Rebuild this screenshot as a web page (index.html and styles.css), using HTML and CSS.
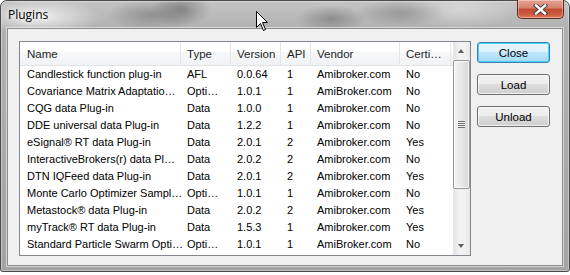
FILE: index.html
```html
<!DOCTYPE html>
<html lang="en">
<head>
    <meta charset="UTF-8">
    <title>Plugins</title>
    <link rel="stylesheet" href="styles.css">
</head>
<body>
    <div class="window">
        <div class="titlebar">
            <span class="title">Plugins</span>
            <div class="close-x">
                <svg width="15" height="11" viewBox="0 0 15 11">
                    <path d="M3 1.5 L12 9.5 M12 1.5 L3 9.5" stroke="#3b3b3b" stroke-width="4.2" stroke-linecap="square"/>
                    <path d="M3 1.5 L12 9.5 M12 1.5 L3 9.5" stroke="#ffffff" stroke-width="2.4" stroke-linecap="square"/>
                </svg>
            </div>
        </div>
        <div class="client">
            <div class="listview">
                <div class="list-body">
                    <div class="row header">
                        <div class="cell">Name</div>
                        <div class="cell">Type</div>
                        <div class="cell">Version</div>
                        <div class="cell">API</div>
                        <div class="cell">Vendor</div>
                        <div class="cell">Certi…</div>
                    </div>
                    <div class="row"><div class="cell">Candlestick function plug-in</div><div class="cell">AFL</div><div class="cell">0.0.64</div><div class="cell">1</div><div class="cell">Amibroker.com</div><div class="cell">No</div></div>
                    <div class="row"><div class="cell">Covariance Matrix Adaptatio…</div><div class="cell">Opti…</div><div class="cell">1.0.1</div><div class="cell">1</div><div class="cell">AmiBroker.com</div><div class="cell">No</div></div>
                    <div class="row"><div class="cell">CQG data Plug-in</div><div class="cell">Data</div><div class="cell">1.0.0</div><div class="cell">1</div><div class="cell">Amibroker.com</div><div class="cell">No</div></div>
                    <div class="row"><div class="cell">DDE universal data Plug-in</div><div class="cell">Data</div><div class="cell">1.2.2</div><div class="cell">1</div><div class="cell">Amibroker.com</div><div class="cell">No</div></div>
                    <div class="row"><div class="cell">eSignal® RT data Plug-in</div><div class="cell">Data</div><div class="cell">2.0.1</div><div class="cell">2</div><div class="cell">Amibroker.com</div><div class="cell">Yes</div></div>
                    <div class="row"><div class="cell">InteractiveBrokers(r) data Pl…</div><div class="cell">Data</div><div class="cell">2.0.2</div><div class="cell">2</div><div class="cell">Amibroker.com</div><div class="cell">No</div></div>
                    <div class="row"><div class="cell">DTN IQFeed data Plug-in</div><div class="cell">Data</div><div class="cell">2.0.1</div><div class="cell">2</div><div class="cell">Amibroker.com</div><div class="cell">Yes</div></div>
                    <div class="row"><div class="cell">Monte Carlo Optimizer Sampl…</div><div class="cell">Opti…</div><div class="cell">1.0.1</div><div class="cell">1</div><div class="cell">Amibroker.com</div><div class="cell">No</div></div>
                    <div class="row"><div class="cell">Metastock® data Plug-in</div><div class="cell">Data</div><div class="cell">2.0.2</div><div class="cell">2</div><div class="cell">Amibroker.com</div><div class="cell">Yes</div></div>
                    <div class="row"><div class="cell">myTrack® RT data Plug-in</div><div class="cell">Data</div><div class="cell">1.5.3</div><div class="cell">1</div><div class="cell">Amibroker.com</div><div class="cell">Yes</div></div>
                    <div class="row"><div class="cell">Standard Particle Swarm Opti…</div><div class="cell">Opti…</div><div class="cell">1.0.1</div><div class="cell">1</div><div class="cell">AmiBroker.com</div><div class="cell">No</div></div>
                </div>
                <div class="scrollbar">
                    <div class="arrow arrow-up"></div>
                    <div class="track">
                        <div class="thumb">
                            <div class="grip"></div>
                        </div>
                    </div>
                    <div class="arrow arrow-down"></div>
                </div>
            </div>
            <div class="buttons">
                <button class="btn btn-default">Close</button>
                <button class="btn">Load</button>
                <button class="btn">Unload</button>
            </div>
        </div>
        <svg class="cursor" width="13" height="21" viewBox="0 0 13 21">
            <path d="M0.5 0.5 L0.5 16.5 L4.5 12.5 L7.5 19.5 L9.5 18.5 L6.5 11.5 L11.5 11.5 Z" fill="#ffffff" stroke="#000000" stroke-width="1"/>
        </svg>
    </div>
</body>
</html>
```

FILE: styles.css
```css
* {
    margin: 0;
    padding: 0;
    box-sizing: border-box;
}

body {
    background-color: #ffffff;
    font-family: "Liberation Sans", Arial, sans-serif;
    font-size: 11px;
    color: #000;
}

/* Window frame */
.window {
    position: relative;
    width: 570px;
    height: 272px;
    border: 1px solid #4a4a4a;
    border-radius: 7px 7px 3px 3px;
    background-color: #b4b4b4;
    background-image:
        radial-gradient(ellipse 60px 18px at 40px 16px, rgba(255, 255, 255, 0.75), rgba(255, 255, 255, 0) 100%),
        radial-gradient(ellipse 45px 16px at 150px 14px, rgba(110, 110, 110, 0.55), rgba(110, 110, 110, 0) 100%),
        radial-gradient(ellipse 30px 18px at 180px 8px, rgba(90, 90, 90, 0.55), rgba(90, 90, 90, 0) 100%),
        radial-gradient(ellipse 35px 14px at 330px 18px, rgba(100, 100, 100, 0.5), rgba(100, 100, 100, 0) 100%),
        radial-gradient(ellipse 45px 14px at 400px 12px, rgba(110, 110, 110, 0.45), rgba(110, 110, 110, 0) 100%),
        radial-gradient(ellipse 60px 20px at 460px 8px, rgba(230, 230, 230, 0.6), rgba(230, 230, 230, 0) 100%),
        linear-gradient(to bottom, #c4c4c4, #b0b0b0 30px, #a4a4a4);
    box-shadow: inset 0 0 0 1px rgba(255, 255, 255, 0.35);
}

.titlebar {
    height: 27px;
    display: flex;
    justify-content: space-between;
    align-items: flex-start;
}

.title {
    font-family: "Open Sans", sans-serif;
    font-size: 12px;
    line-height: 14px;
    margin: 7px 0 0 7px;
    color: #000;
    text-shadow: 0 0 6px #fff, 0 0 10px #fff;
}

.close-x {
    width: 47px;
    height: 19px;
    margin-top: -1px;
    margin-right: 5px;
    border: 1px solid #5b2b22;
    border-top: none;
    border-radius: 0 0 5px 5px;
    background: linear-gradient(to bottom, #e8a493 0%, #d47f6c 45%, #c24a34 50%, #cc5a3f 80%, #e07c5c 100%);
    box-shadow: inset 0 0 0 1px rgba(255, 255, 255, 0.35);
    display: flex;
    justify-content: center;
    align-items: center;
}

.client {
    margin: 0 6px 5px 6px;
    height: 238px;
    border: 1px solid #8d8d8d;
    background-color: #f0f0f0;
    padding: 12px 12px 9px 11px;
    display: flex;
    gap: 6px;
    box-shadow: 0 0 0 1px rgba(255, 255, 255, 0.5);
}

/* List view */
.listview {
    width: 452px;
    height: 215px;
    border: 1px solid #828790;
    background-color: #fff;
    display: flex;
}

.list-body {
    width: 433px;
}

.row {
    display: grid;
    grid-template-columns: 161px 50px 50px 30px 89px 51px;
    height: 17px;
    line-height: 17px;
}

.cell {
    padding-left: 6px;
    white-space: nowrap;
}

.row .cell:first-child {
    padding-left: 7px;
}

.header {
    height: 24px;
    line-height: 24px;
    font-size: 11.5px;
    color: #1e1e1e;
    background: linear-gradient(to bottom, #ffffff 0%, #ffffff 45%, #f7f8fa 45%, #f1f2f4 100%);
    border-bottom: 1px solid #e2e3e6;
}

.header .cell {
    border-right: 1px solid #e5e5e5;
}

/* Scrollbar */
.scrollbar {
    width: 17px;
    display: flex;
    flex-direction: column;
    background: linear-gradient(to right, #e3e3e3, #f2f2f2 40%, #f2f2f2 70%, #e8e8e8);
}

.arrow {
    height: 17px;
    position: relative;
}

.arrow::after {
    content: "";
    position: absolute;
    left: 5px;
    width: 0;
    height: 0;
    border-left: 3.5px solid transparent;
    border-right: 3.5px solid transparent;
}

.arrow-up::after {
    top: 7px;
    border-bottom: 4px solid #606060;
}

.arrow-down::after {
    top: 6px;
    border-top: 4px solid #606060;
}

.track {
    flex: 1;
    padding-top: 1px;
}

.thumb {
    height: 129px;
    border: 1px solid #979797;
    border-radius: 2px;
    background: linear-gradient(to right, #f4f4f4, #e8e8e8 50%, #d6d6d6);
    box-shadow: inset 0 0 0 1px rgba(255, 255, 255, 0.8);
    display: flex;
    justify-content: center;
    align-items: center;
}

.grip {
    width: 7px;
    height: 7px;
    background: repeating-linear-gradient(to bottom, #6d6d6d 0, #6d6d6d 1px, #f4f4f4 1px, #f4f4f4 2px);
}

/* Buttons */
.buttons {
    display: flex;
    flex-direction: column;
    gap: 11px;
    padding-top: 1px;
}

.btn {
    width: 73px;
    height: 21px;
    font-family: "Liberation Sans", Arial, sans-serif;
    font-size: 11.5px;
    color: #000;
    border: 1px solid #707070;
    border-radius: 3px;
    background: linear-gradient(to bottom, #f2f2f2 0%, #ebebeb 50%, #dddddd 50%, #cfcfcf 100%);
    box-shadow: inset 0 0 0 1px rgba(255, 255, 255, 0.7);
}

.btn-default {
    border-color: #3c7fb1;
    background: linear-gradient(to bottom, #eaf6fd 0%, #d9f0fc 50%, #bee6fd 50%, #a7d9f5 100%);
    box-shadow: inset 0 0 0 1px #48d4f4;
}

.cursor {
    position: absolute;
    left: 255px;
    top: 10px;
}
```
